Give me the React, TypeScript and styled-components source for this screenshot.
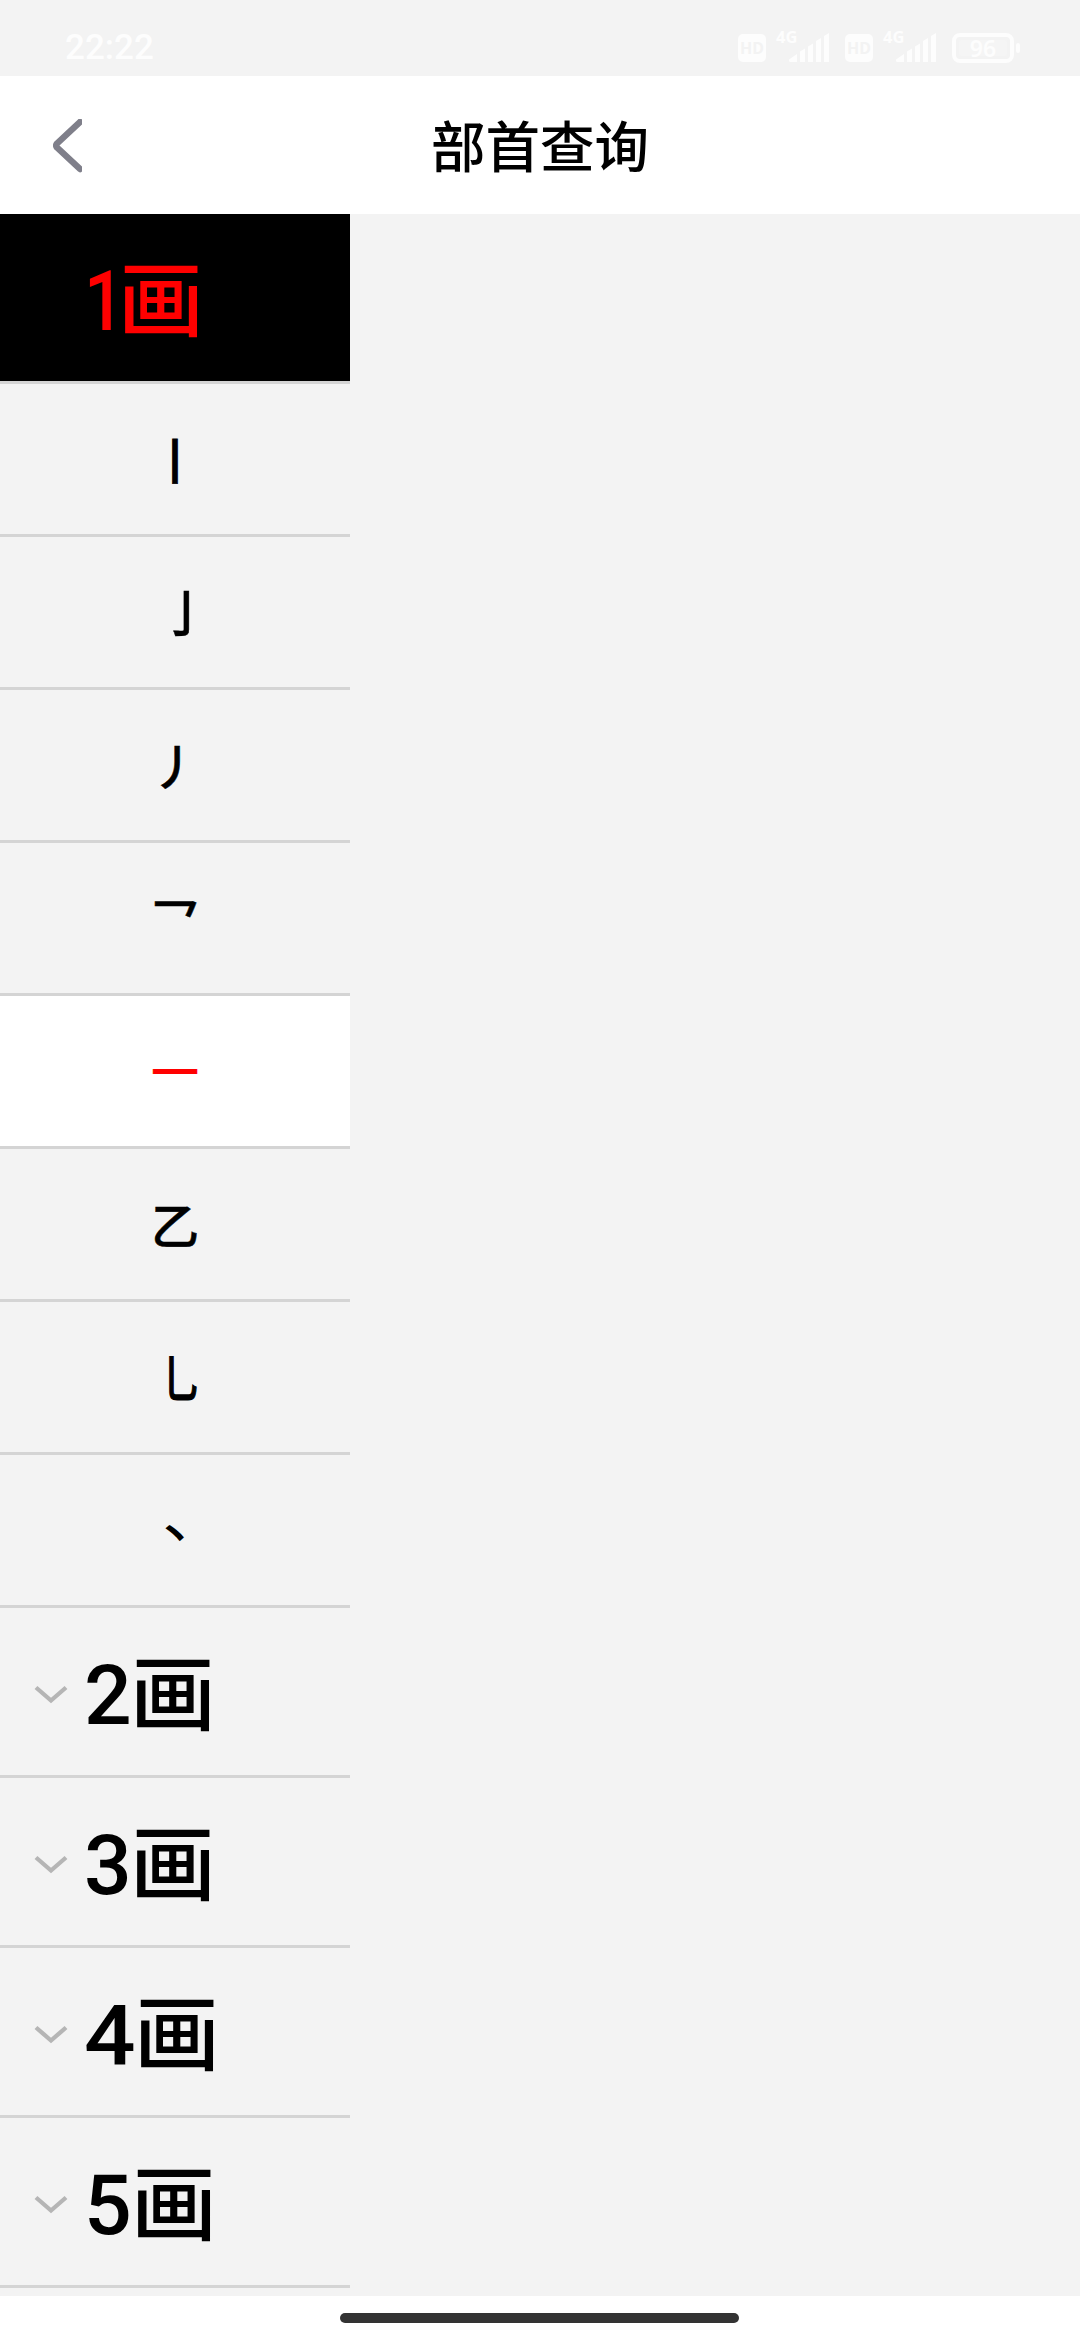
import React from 'react';
import styled, { createGlobalStyle } from 'styled-components';

const Global = createGlobalStyle`
  * { box-sizing: border-box; }
  html, body { margin: 0; padding: 0; background: #f3f3f3; }
  body { font-family: "Noto Sans CJK SC", "Noto Sans", sans-serif; color: #000; }
`;

const Screen = styled.div`
  display: flex;
  flex-direction: column;
  width: 1080px;
  height: 2340px;
  overflow: hidden;
  background: #f3f3f3;
`;

const StatusBar = styled.div`
  display: flex;
  align-items: flex-start;
  justify-content: space-between;
  height: 76px;
  padding: 0 60px 0 65px;
  color: #fdfdfd;
  font-family: Roboto, sans-serif;
`;

const Clock = styled.span`
  padding-top: 27px;
  font-size: 35px;
  line-height: 41px;
  font-weight: 500;
`;

const StatusIcons = styled.div`
  display: flex;
  align-items: flex-start;
  padding-top: 31px;
`;

const HdBadge = styled.span`
  display: flex;
  align-items: center;
  justify-content: center;
  width: 28px;
  height: 28px;
  margin-top: 3px;
  border-radius: 5px;
  background: #fdfdfd;
  color: #f3f3f3;
  font: 700 16px/28px "Noto Sans", sans-serif;
`;

const Network = styled.span`
  width: 24px;
  margin-left: 10px;
  font: 700 16.500px/12px "Noto Sans", sans-serif;
`;

const Bars = styled.svg`
  width: 41px;
  height: 30px;
  margin: 2px 15px 0 -11px;
`;

const Battery = styled.span`
  display: flex;
  align-items: center;
  margin-top: 2px;
`;

const BatteryCase = styled.span`
  display: flex;
  width: 62px;
  height: 30px;
  padding: 3px;
  border: 4px solid #fdfdfd;
  border-radius: 8px;
`;

const BatteryLevel = styled.span`
  flex: 1;
  border-radius: 2px;
  background: #f5f5f5;
  text-align: center;
  font: 600 23px/17px "Noto Sans", sans-serif;
`;

const BatteryTip = styled.span`
  width: 4px;
  height: 10px;
  margin-left: 2px;
  border-radius: 2px;
  background: #fdfdfd;
`;

const Header = styled.header`
  display: grid;
  grid-template-columns: 140px 1fr 140px;
  align-items: center;
  height: 138px;
  background: #fff;
`;

const Back = styled.button`
  display: flex;
  width: 30px;
  height: 54px;
  margin: 1px 0 0 53px;
  padding: 0;
  border: 0;
  background: none;
`;

const Title = styled.h1`
  margin: 0 0 2px;
  text-align: center;
  font-size: 54.500px;
  line-height: 80px;
  font-weight: 500;
`;

const Main = styled.main`
  display: flex;
  flex: 1;
  overflow: hidden;
`;

const Sidebar = styled.nav`
  width: 350px;
`;

const Group = styled.div<{ $open?: boolean }>`
  display: flex;
  align-items: center;
  height: 170px;
  padding-left: 34px;
  border-bottom: 3px solid #d4d4d4;
  background: ${(p) => (p.$open ? '#000' : '#f3f3f3')};
  color: ${(p) => (p.$open ? '#f00' : '#000')};
`;

const Chevron = styled.svg<{ $hidden?: boolean }>`
  width: 34px;
  height: 20px;
  margin: 4px 16px 0 0;
  visibility: ${(p) => (p.$hidden ? 'hidden' : 'visible')};
`;

const GroupLabel = styled.span`
  display: flex;
  align-items: baseline;
  margin-top: 2px;
  font-size: 82px;
  line-height: 100px;
  font-weight: 500;
`;

const Digit = styled.span<{ $width: number; $stretch: number }>`
  width: ${(p) => p.$width}px;
  font-family: Roboto, sans-serif;
  font-size: 84px;
  letter-spacing: ${(p) => (p.$stretch < 1 ? '-7px' : 'normal')};
  transform: translateY(-0.5px) scaleX(${(p) => p.$stretch});
  transform-origin: left;
`;

const Stroke = styled.span`
  transform: translateX(-1px) scaleX(1.05);
  transform-origin: left;
`;

const Radical = styled.div<{ $active?: boolean }>`
  display: flex;
  align-items: center;
  justify-content: center;
  height: 153px;
  border-bottom: 3px solid #d4d4d4;
  background: ${(p) => (p.$active ? '#fff' : '#f3f3f3')};
  color: ${(p) => (p.$active ? '#f00' : '#000')};
  font-size: 48px;
  line-height: 70px;
  font-weight: 500;
`;

const Glyph = styled.span<{ $shape: string; $weight?: number }>`
  -webkit-text-stroke: ${(p) => p.$weight ?? 0.5}px currentColor;
  transform: ${(p) => p.$shape};
`;

const HomeArea = styled.footer`
  display: flex;
  justify-content: center;
  height: 44px;
  padding: 17px 1px 0 0;
  background: #fff;
`;

const HomeBar = styled.span`
  width: 399px;
  height: 10px;
  border-radius: 5px;
  background: #333;
`;

const radicals = [
  { char: '丨', shape: 'translateY(-1px)', weight: 0.8 },
  { char: '亅', shape: 'translate(11px, -1.5px) scaleY(1.03)' },
  { char: '丿', shape: 'translateY(-1.5px)' },
  { char: '乛', shape: 'none' },
  { char: '一', shape: 'translateY(-2px)', weight: 0.2 },
  { char: '乙', shape: 'translateY(-1px)' },
  { char: '乚', shape: 'translate(6.5px, -1.5px) scale(0.77, 1.07)', weight: 1.2 },
  { char: '丶', shape: 'translateY(2px) scale(0.7)', weight: 2.4 },
];

const groups = [
  { digit: '2', width: 46.8, stretch: 1 },
  { digit: '3', width: 46.8, stretch: 1 },
  { digit: '4', width: 50.8, stretch: 1.08 },
  { digit: '5', width: 47.8, stretch: 1 },
];

function Signal() {
  return (
    <>
      <HdBadge>HD</HdBadge>
      <Network>4G</Network>
      <Bars viewBox="0 0 41 30" fill="#fdfdfd">
        <path d="M0 26.5L8 21V29H1.500Q0 29 0 27.500Z" />
        <path d="M11 18.500L16 15.500V29H11Z" />
        <path d="M19 13.500L24 10.500V29H19Z" />
        <path d="M27 8L32 5V29H27Z" />
        <path d="M35 3L40 0V29H35Z" />
      </Bars>
    </>
  );
}

type GroupRowProps = { digit: string; width: number; stretch: number; open?: boolean };

function GroupRow({ digit, width, stretch, open }: GroupRowProps) {
  return (
    <Group $open={open}>
      <Chevron $hidden={open} viewBox="0 0 34 20" fill="none" stroke="#b5b5b5" strokeWidth="4.300">
        <path d="M2 3.500L17 16.500L32 3.500" />
      </Chevron>
      <GroupLabel>
        <Digit $width={width} $stretch={stretch}>{digit}</Digit>
        <Stroke>画</Stroke>
      </GroupLabel>
    </Group>
  );
}

export default function App() {
  return (
    <Screen>
      <Global />
      <StatusBar>
        <Clock>22:22</Clock>
        <StatusIcons>
          <Signal />
          <Signal />
          <Battery>
            <BatteryCase>
              <BatteryLevel>96</BatteryLevel>
            </BatteryCase>
            <BatteryTip />
          </Battery>
        </StatusIcons>
      </StatusBar>
      <Header>
        <Back aria-label="返回">
          <svg width="29" height="54" viewBox="0 0 29 54" fill="none" stroke="#7f7f8a" strokeWidth="6.500" strokeLinecap="round" strokeLinejoin="round">
            <path d="M27 3L4 24.500Q2.500 26.500 4 28.500L27 50" />
          </svg>
        </Back>
        <Title>部首查询</Title>
      </Header>
      <Main>
        <Sidebar>
          <GroupRow digit="1" width={34.5} stretch={0.85} open />
          {radicals.map((r) => (
            <Radical key={r.char} $active={r.char === '一'}>
              <Glyph $shape={r.shape} $weight={r.weight}>{r.char}</Glyph>
            </Radical>
          ))}
          {groups.map((g) => (
            <GroupRow key={g.digit} digit={g.digit} width={g.width} stretch={g.stretch} />
          ))}
        </Sidebar>
      </Main>
      <HomeArea>
        <HomeBar />
      </HomeArea>
    </Screen>
  );
}
